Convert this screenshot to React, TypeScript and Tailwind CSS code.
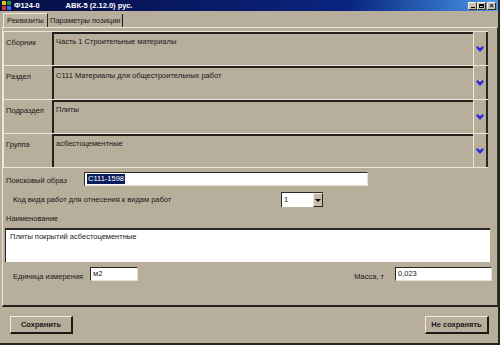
const FONT = "font-['Liberation_Sans',Arial,sans-serif]"

function Chevron() {
  return (
    <svg width="8" height="6" viewBox="0 0 8 6">
      <path d="M0 1.6 L1.6 0 L4 2.2 L6.4 0 L8 1.6 L4 6 Z" fill="#2a2ae0" />
    </svg>
  )
}

function AppIcon() {
  return (
    <svg width="9" height="9" viewBox="0 0 9 9">
      <rect x="0" y="0" width="4" height="4" fill="#e0c020" />
      <rect x="5" y="0" width="4" height="4" fill="#2f8f3a" />
      <rect x="0" y="5" width="4" height="4" fill="#d83030" />
      <rect x="5" y="5" width="4" height="4" fill="#3a6ae0" />
    </svg>
  )
}

function WinButton({ kind }: { kind: "min" | "max" | "close" }) {
  return (
    <div className="w-[9px] h-[8px] bg-[#c8c2b4] border-t border-l border-[#f4f0e8] border-r border-b border-r-[#303030] border-b-[#303030] flex items-center justify-center">
      {kind === "min" && <div className="w-[4px] h-[1px] bg-black mt-[3px]" />}
      {kind === "max" && <div className="w-[5px] h-[4px] border border-black border-t-2" />}
      {kind === "close" && <span className="text-[7px] leading-none font-bold text-black">×</span>}
    </div>
  )
}

function FieldRow({ label, value }: { label: string; value: string }) {
  return (
    <div className="flex h-[34px] border-t border-[#efe8da]">
      <div className="w-[49px] border-l border-[#efe8da] pl-[2px] pt-[6px]">{label}</div>
      <div className="flex-1 border-l-2 border-t-2 border-[#24211d] pl-[2px] pt-[3px]">{value}</div>
      <div className="w-[15px] flex items-center justify-center border-l border-[#efe8da] border-r-2 border-r-[#2b2824]">
        <Chevron />
      </div>
    </div>
  )
}

const inputCls =
  "h-full bg-white border-t border-l border-[#2c2924] border-r border-b border-r-[#e8e0d0] border-b-[#e8e0d0] pl-[2px] flex items-center"

const buttonCls =
  "h-full flex items-center justify-center bg-[#b8ae9c] border-t border-l border-[#f2ebdd] border-r-2 border-b-2 border-r-[#1c1a17] border-b-[#1c1a17] font-bold text-[#1a1a1a]"

export default function App() {
  return (
    <div
      className={`${FONT} w-[500px] h-[345px] bg-[#b8ae9c] flex flex-col overflow-hidden whitespace-nowrap border-r-2 border-b-2 border-[#28241f] text-[7.5px] leading-[10px] text-[#181818]`}
    >
      {/* title bar */}
      <div className="h-[11px] flex items-center bg-linear-to-r from-[#060e44] via-[#0a2480] via-70% to-[#4f98e6] pl-[2px] pr-[2px] text-white font-bold">
        <AppIcon />
        <span className="ml-[3px]">Ф124-0</span>
        <span className="ml-[26px]">АВК-5 (2.12.0) рус.</span>
        <div className="ml-auto flex">
          <WinButton kind="min" />
          <WinButton kind="max" />
          <div className="w-[1px]" />
          <WinButton kind="close" />
        </div>
      </div>

      {/* tabs */}
      <div className="mt-[2px] h-[14px] flex pl-[3px]">
        <div className="w-[45px] h-full bg-[#bdb3a1] border-t border-l border-[#efe8da] border-r border-r-[#2a2622] pl-[3px] flex items-center">
          Реквизиты
        </div>
        <div className="w-[75px] h-[13px] border-r border-[#1a1814] pl-[2px] flex items-center mt-[1px]">
          Параметры позиции
        </div>
      </div>

      {/* tab page */}
      <div className="h-[280px] ml-[2px] w-[496px] border-t border-l border-[#ece4d4] border-r border-b-2 border-r-[#3a3630] border-b-[#24211d] flex flex-col">
        <div className="mt-[3px] w-[485px] border-b border-[#efe8da]">
          <FieldRow label="Сборник" value="Часть 1 Строительные материалы" />
          <FieldRow label="Раздел" value="С111 Материалы для общестроительных работ" />
          <FieldRow label="Подраздел" value="Плиты" />
          <FieldRow label="Группа" value="асбестоцементные" />
        </div>

        <div className="mt-[4px] h-[14px] flex items-end">
          <div className="w-[81px] pl-[3px]">Поисковый образ</div>
          <div className={`${inputCls} w-[284px]`}>
            <span className="bg-[#0a1e5e] text-white px-[1px]">С111-1598</span>
          </div>
        </div>

        <div className="mt-[6px] h-[15px] flex items-center">
          <div className="w-[278px] pl-[10px]">Код вида работ для отнесения к видам работ</div>
          <div className="w-[42px] h-full flex bg-white border-t border-l border-[#2c2924]">
            <div className="flex-1 pl-[2px] flex items-center">1</div>
            <div className="w-[10px] bg-[#c4bcac] border-t border-l border-[#f2ebdd] border-r border-b border-r-[#2a2622] border-b-[#2a2622] flex items-center justify-center">
              <div className="w-0 h-0 border-l-[3px] border-r-[3px] border-t-[3px] border-l-transparent border-r-transparent border-t-black" />
            </div>
          </div>
        </div>

        <div className="mt-[7px] h-[10px] pl-[3px] flex items-center">Наименование</div>

        <div className="mt-[4px] ml-[2px] w-[485px] h-[34px] bg-white border-t-2 border-l border-[#2c2924] pl-[4px] pt-[2px]">
          Плиты покрытий асбестоцементные
        </div>

        <div className="mt-[5px] h-[14px] flex items-center">
          <div className="w-[87px] pl-[10px] pt-[6px]">Единица измерения</div>
          <div className={`${inputCls} w-[48px]`}>м2</div>
          <div className="flex-1" />
          <div className="pt-[6px]">Масса, т</div>
          <div className={`${inputCls} w-[97px] ml-[11px] mr-[5px]`}>0,023</div>
        </div>
      </div>

      {/* buttons */}
      <div className="mt-[9px] h-[18px] flex justify-between pl-[10px] pr-[9px]">
        <div className={`${buttonCls} w-[63px]`}>Сохранить</div>
        <div className={`${buttonCls} w-[64px]`}>Не сохранять</div>
      </div>
    </div>
  )
}
